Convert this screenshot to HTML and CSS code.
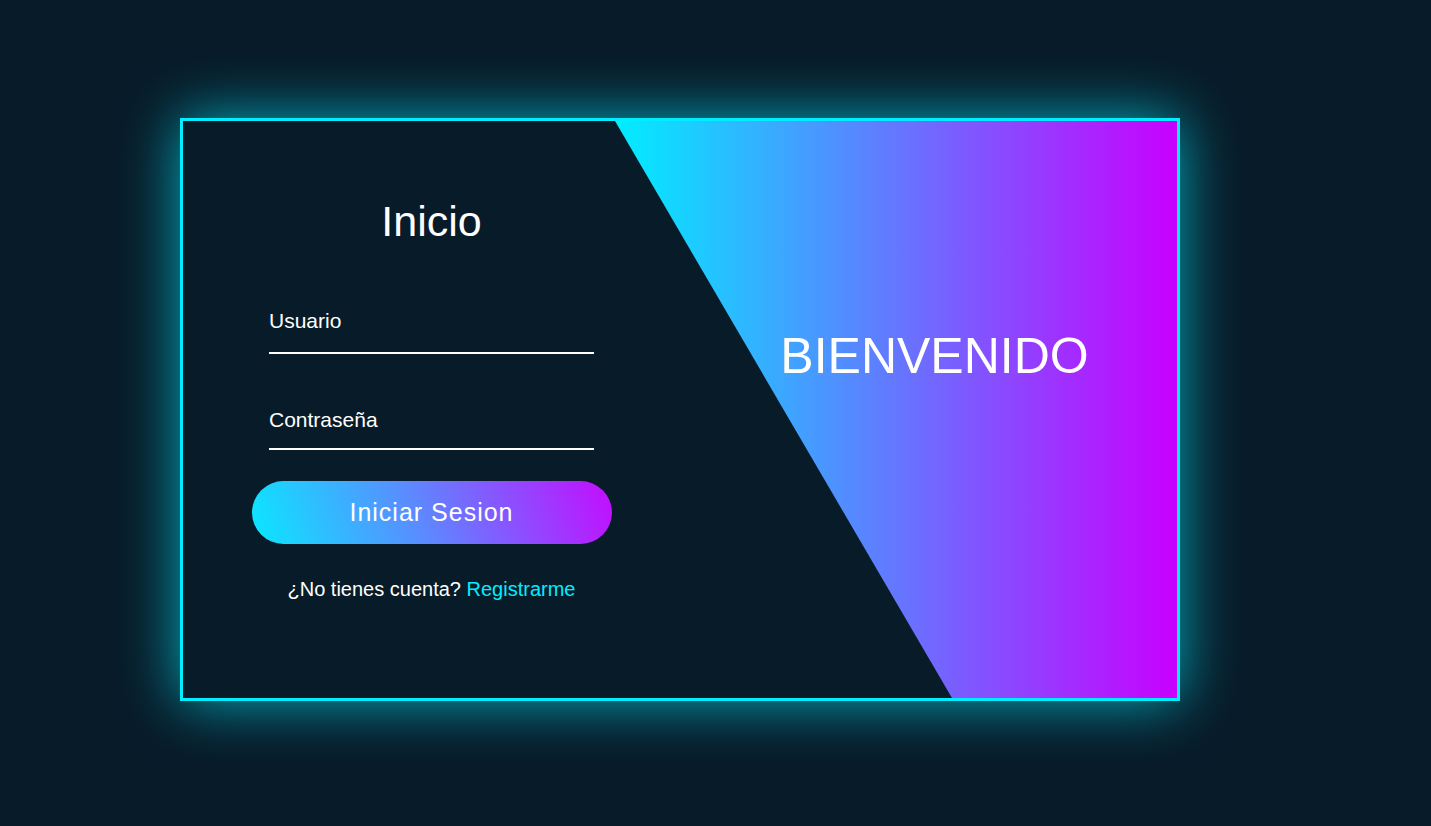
FILE: index.html
```html
<!DOCTYPE html>
<html lang="es">
<head>
<meta charset="utf-8">
<title>Inicio</title>
<link rel="stylesheet" href="styles.css">
</head>
<body>
<div class="stage">
  <div class="card">
    <div class="bg-slant"></div>
    <form class="form-panel">
      <h2 class="title">Inicio</h2>
      <div class="field field-user">
        <input type="text" required>
        <label>Usuario</label>
      </div>
      <div class="field field-pass">
        <input type="password" required>
        <label>Contraseña</label>
      </div>
      <button type="button" class="btn">Iniciar Sesion</button>
      <p class="footer">¿No tienes cuenta? <a href="#" class="link">Registrarme</a></p>
    </form>
    <div class="welcome">
      <h2>BIENVENIDO</h2>
    </div>
  </div>
</div>
</body>
</html>
```
FILE: styles.css
```css
* { margin: 0; padding: 0; box-sizing: border-box; }
html, body { height: 100%; }
body {
  background: #081b29;
  font-family: "Liberation Sans", Arial, sans-serif;
  color: #fff;
}
.stage {
  display: flex;
  padding: 118px 0 0 180px;
}
.card {
  position: relative;
  width: 1000px;
  height: 583px;
  border: 3px solid #0ef;
  box-shadow: 0 0 55px rgba(0, 238, 255, 0.7);
  display: flex;
  overflow: hidden;
  background: #081b29;
}
.bg-slant {
  position: absolute;
  inset: 0;
  background: linear-gradient(to right, #0ef 432px, #c800ff 100%);
  clip-path: polygon(432px 0, 100% 0, 100% 100%, 769px 100%);
}
.form-panel {
  position: relative;
  width: 497px;
  display: flex;
  flex-direction: column;
  align-items: center;
  padding-top: 73px;
}
.title {
  font-weight: normal;
  font-size: 43px;
  line-height: 54px;
}
.field {
  position: relative;
  width: 325px;
  border-bottom: 2px solid #fff;
}
.field-user {
  height: 59px;
  margin-top: 47px;
}
.field-pass {
  height: 55px;
  margin-top: 41px;
}
.field input {
  width: 100%;
  height: 100%;
  background: transparent;
  border: none;
  outline: none;
  color: #fff;
  font-size: 20px;
}
.field label {
  position: absolute;
  left: 0;
  top: 1px;
  font-size: 21px;
  line-height: 50px;
  color: #fff;
  pointer-events: none;
}
.field-pass label { top: 0; }
.btn {
  margin-top: 31px;
  width: 360px;
  height: 63px;
  border: none;
  border-radius: 32px;
  background: linear-gradient(70deg, #0ae8ff 0%, #5a8cff 45%, #c40cff 100%);
  color: #fff;
  font-family: inherit;
  font-size: 25px;
  letter-spacing: 1px;
  cursor: pointer;
}
.footer {
  margin-top: 33px;
  font-size: 20px;
  line-height: 24px;
}
.link {
  color: #0ef;
  text-decoration: none;
}
.welcome {
  position: relative;
  flex: 1;
  display: flex;
  justify-content: center;
  padding-left: 12px;
  padding-top: 205px;
}
.welcome h2 {
  font-weight: normal;
  font-size: 50px;
  line-height: 60px;
  align-self: flex-start;
}
```
